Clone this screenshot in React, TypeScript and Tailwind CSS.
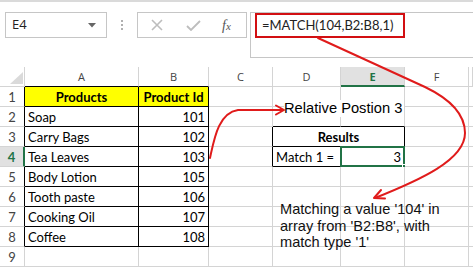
import React from 'react';

type Cell = {
  text?: string;
  align?: 'left' | 'right' | 'center';
  bold?: boolean;
  yellow?: boolean;
  r?: boolean; // black right border
  b?: boolean; // black bottom border
  span?: number;
  selected?: boolean;
};

const COLS = ['A', 'B', 'C', 'D', 'E', 'F', ''];

const rows: { n: number; edge?: boolean; cells: Cell[] }[] = [
  {
    n: 1,
    edge: true,
    cells: [
      { text: 'Products', align: 'center', bold: true, yellow: true, r: true, b: true },
      { text: 'Product Id', align: 'center', bold: true, yellow: true, r: true, b: true },
      {}, {}, {}, {}, {},
    ],
  },
  {
    n: 2,
    edge: true,
    cells: [
      { text: 'Soap', r: true, b: true },
      { text: '101', align: 'right', r: true, b: true },
      {}, { b: true }, { b: true }, {}, {},
    ],
  },
  {
    n: 3,
    edge: true,
    cells: [
      { text: 'Carry Bags', r: true, b: true },
      { text: '102', align: 'right', r: true, b: true },
      { r: true },
      { text: 'Results', align: 'center', bold: true, r: true, b: true, span: 2 },
      {}, {},
    ],
  },
  {
    n: 4,
    edge: true,
    cells: [
      { text: 'Tea Leaves', r: true, b: true },
      { text: '103', align: 'right', r: true, b: true },
      { r: true },
      { text: 'Match 1 =', r: true, b: true },
      { text: '3', align: 'right', r: true, b: true, selected: true },
      {}, {},
    ],
  },
  {
    n: 5,
    edge: true,
    cells: [
      { text: 'Body Lotion', r: true, b: true },
      { text: '105', align: 'right', r: true, b: true },
      {}, {}, {}, {}, {},
    ],
  },
  {
    n: 6,
    edge: true,
    cells: [
      { text: 'Tooth paste', r: true, b: true },
      { text: '106', align: 'right', r: true, b: true },
      {}, {}, {}, {}, {},
    ],
  },
  {
    n: 7,
    edge: true,
    cells: [
      { text: 'Cooking Oil', r: true, b: true },
      { text: '107', align: 'right', r: true, b: true },
      {}, {}, {}, {}, {},
    ],
  },
  {
    n: 8,
    edge: true,
    cells: [
      { text: 'Coffee', r: true, b: true },
      { text: '108', align: 'right', r: true, b: true },
      {}, {}, {}, {}, {},
    ],
  },
  { n: 9, cells: [{}, {}, {}, {}, {}, {}, {}] },
];

const calibri = { fontFamily: 'Lato, "Liberation Sans", sans-serif' };
const arial = { fontFamily: '"Liberation Sans", Arial, sans-serif' };

function GridCell({ c }: { c: Cell }) {
  return (
    <div
      className={[
        'relative h-5 border-r border-b px-[3px] leading-5 whitespace-nowrap text-[13px] text-black',
        c.span === 2 ? 'col-span-2' : '',
        c.r ? 'border-r-black' : 'border-r-[#d4d4d4]',
        c.b ? 'border-b-black' : 'border-b-[#d4d4d4]',
        c.yellow ? 'bg-[#ffff00]' : 'bg-white',
        c.bold ? 'font-bold' : '',
        c.align === 'right' ? 'text-right' : c.align === 'center' ? 'text-center' : 'text-left',
      ].join(' ')}
      style={calibri}
    >
      {c.text}
      {c.selected && (
        <>
          <div className="absolute -left-px -top-px -right-px -bottom-px border-2 border-[#217346]" />
          <div className="absolute -right-[3px] -bottom-[3px] h-[5px] w-[5px] border border-white bg-[#217346]" />
        </>
      )}
    </div>
  );
}

export default function App() {
  return (
    <div className="relative h-[268px] w-[473px] overflow-hidden bg-white">
      <div className="h-[2px] bg-[#dadada]" />

      {/* formula bar */}
      <div className="flex items-start pt-[10px]">
        <div className="ml-[5px] flex h-[26px] w-[102px] items-center justify-between border border-[#c6c6c6] pl-[6px] pr-[10px]">
          <span className="text-[13px] text-[#222]" style={{ fontFamily: '"Open Sans", sans-serif' }}>
            E4
          </span>
          <svg width="8" height="5" viewBox="0 0 8 5">
            <path d="M0 0 L8 0 L4 4.5 Z" fill="#666" />
          </svg>
        </div>
        <div className="flex h-[26px] w-[30px] flex-col items-center justify-center gap-[2px]">
          <span className="h-[2px] w-[2px] bg-[#b0b0b0]" />
          <span className="h-[2px] w-[2px] bg-[#b0b0b0]" />
          <span className="h-[2px] w-[2px] bg-[#b0b0b0]" />
        </div>
        <div className="flex h-[26px] w-[110px] items-center border border-[#c6c6c6]">
          <svg width="12" height="12" viewBox="0 0 12 12" className="ml-[13px]">
            <path d="M1 1 L11 11 M11 1 L1 11" stroke="#bdbdbd" strokeWidth="1.6" />
          </svg>
          <svg width="15" height="11" viewBox="0 0 15 11" className="ml-[23px]">
            <path d="M1 6 L5 10 L14 1" stroke="#bdbdbd" strokeWidth="1.8" fill="none" />
          </svg>
          <span
            className="ml-[21px] text-[14px] italic text-[#555]"
            style={{ fontFamily: '"Liberation Serif", serif' }}
          >
            f<span className="text-[11px]">x</span>
          </span>
        </div>
        <div className="ml-[3px] h-[46px] flex-1 border-y border-l border-[#c6c6c6] pl-[4px]">
          <div className="flex h-[25px] w-[150px] items-center border-2 border-[#d20f12] pl-[5px]">
            <span className="text-[13px] text-[#222]" style={calibri}>
              =MATCH(104,B2:B8,1)
            </span>
          </div>
        </div>
      </div>

      {/* sheet */}
      <div className="mt-[9px] grid grid-cols-[25px_114px_70px_64px_68px_64px_64px_4px]">
        <div className="flex h-5 items-end justify-end border-r border-b border-[#d4d4d4] pb-[2px] pr-[1px]">
          <svg width="13" height="12" viewBox="0 0 13 12">
            <path d="M13 0 L13 12 L0 12 Z" fill="#dadada" />
          </svg>
        </div>
        {COLS.map((c, i) => (
          <div
            key={i}
            className={[
              'h-5 border-r text-center leading-5 text-[11px]',
              c === 'E'
                ? 'border-b-2 border-b-[#217346] bg-[#e1e1e1] font-bold text-[#217346]'
                : 'border-b text-[#444]',
              c === 'A' || c === 'B' ? 'border-b-black' : c === 'E' ? '' : 'border-b-[#d4d4d4]',
              'border-r-[#d4d4d4]',
            ].join(' ')}
            style={{ fontFamily: '"Open Sans", sans-serif' }}
          >
            {c}
          </div>
        ))}

        {rows.map((row) => (
          <React.Fragment key={row.n}>
            <div
              className={[
                'h-5 border-b border-b-[#d4d4d4] text-center leading-5 text-[13px]',
                row.n === 4
                  ? 'border-r-2 border-r-[#217346] bg-[#e1e1e1] font-bold text-[#217346]'
                  : row.edge
                    ? 'border-r border-r-black text-[#444]'
                    : 'border-r border-r-[#d4d4d4] text-[#444]',
              ].join(' ')}
              style={calibri}
            >
              {row.n}
            </div>
            {row.cells.map((c, i) => (
              <GridCell key={i} c={c} />
            ))}
          </React.Fragment>
        ))}
      </div>

      {/* floating text boxes */}
      <div
        className="absolute left-[284px] top-[100px] whitespace-nowrap bg-white pr-[2px] text-[14.7px] leading-[17px] text-black"
        style={arial}
      >
        Relative Postion 3
      </div>
      <div
        className="absolute left-[280px] top-[201px] text-[14.6px] leading-[16.5px] text-[#111]"
        style={arial}
      >
        Matching a value '104' in
        <br />
        array from 'B2:B8', with
        <br />
        match type '1'
      </div>

      {/* red arrows */}
      <svg className="pointer-events-none absolute left-0 top-0" width="473" height="268" viewBox="0 0 473 268">
        <g stroke="#e01b1b" strokeWidth="2" fill="none" strokeLinecap="round" strokeLinejoin="round">
          <path d="M210 158 C214 140 218 113 238 110 L283 110" />
          <path d="M276 105.5 L284 110 L276 114.5" />
          <path d="M318 38 L425 87 C450 99 465 115 465 133 C465 160 420 180 375 198" />
          <path d="M381 190 L374 198 L385 198.5" />
        </g>
      </svg>
    </div>
  );
}
